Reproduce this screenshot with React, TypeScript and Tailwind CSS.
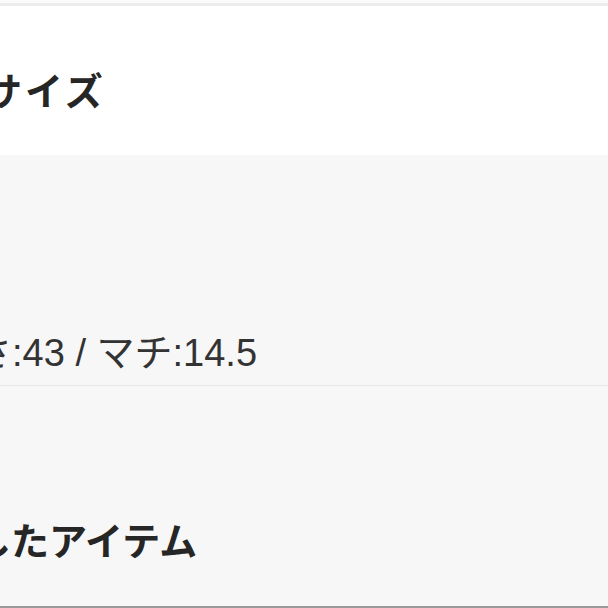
export default function App() {
  return (
    <div className="w-[608px] h-[608px] overflow-hidden bg-white flex flex-col font-['Noto_Sans_CJK_JP','Noto_Sans',sans-serif]">
      {/* top divider */}
      <div className="h-[3px] bg-[#fbfbfb]" />
      <div className="h-[3px] bg-[#ececec]" />

      {/* size heading */}
      <section className="h-[149px] bg-white pt-[64px] overflow-hidden">
        <h2 className="-ml-[16px] whitespace-nowrap text-[38px] leading-none font-bold tracking-[3px] text-[#262626]">
          サイズ
        </h2>
      </section>

      {/* size detail */}
      <section className="h-[230px] bg-[#f7f7f7] pt-[179px] overflow-hidden">
        <p className="-ml-[64px] whitespace-nowrap text-[38px] leading-none text-[#333333] font-['Liberation_Sans','Noto_Sans_CJK_JP',sans-serif]">
          高さ:43 / マチ:14.5
        </p>
      </section>
      <div className="h-px bg-[#e6e6e6]" />

      {/* recently viewed */}
      <section className="flex-1 bg-[#f7f7f7] pt-[134px] overflow-hidden">
        <h2 className="-ml-[179px] whitespace-nowrap text-[38px] leading-none font-bold text-[#262626]">
          チェックしたアイテム
        </h2>
      </section>
      <div className="h-[2px] bg-[#9a9a9a]" />
    </div>
  );
}
